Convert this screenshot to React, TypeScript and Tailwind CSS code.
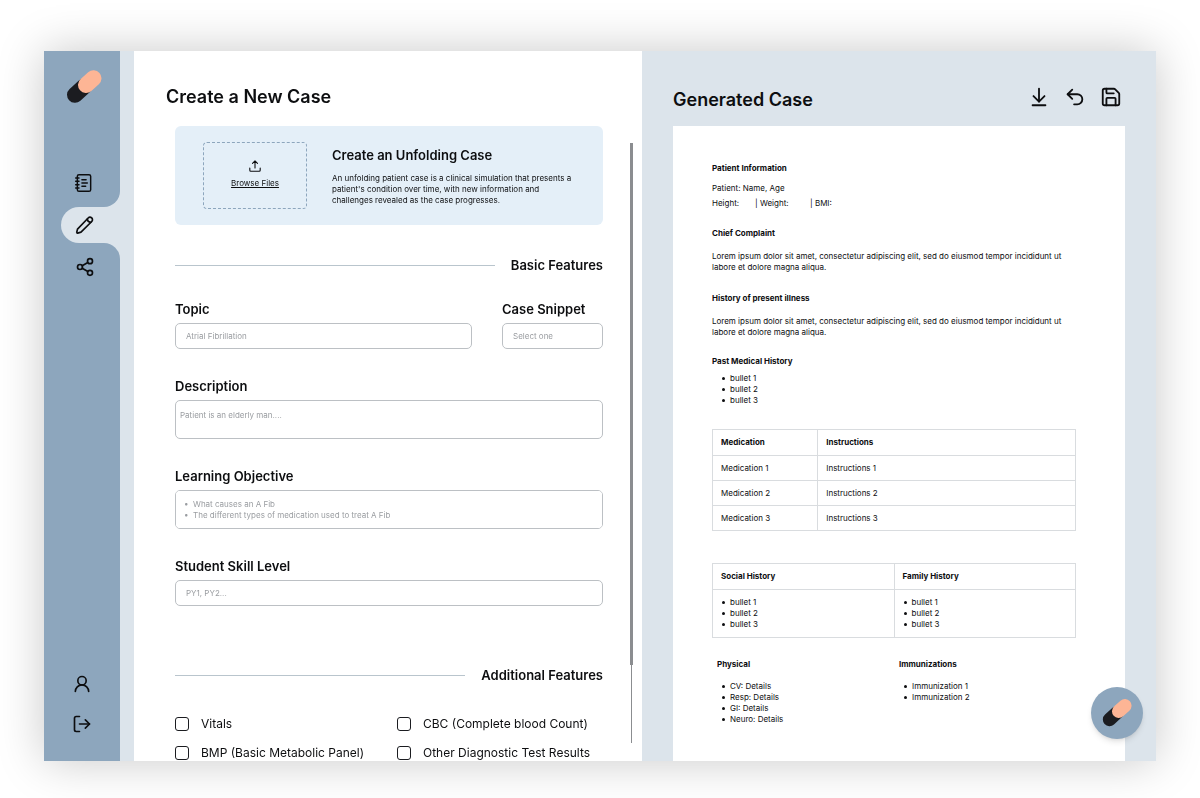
import React, { useState } from "react";
import {
	ArrowDownToLine,
	LogOut,
	NotebookText,
	Save,
	Share2,
	Undo2,
	UserRound,
} from "lucide-react";

const lorem =
	"Lorem ipsum dolor sit amet, consectetur adipiscing elit, sed do eiusmod tempor incididunt ut labore et dolore magna aliqua.";

const bullets = ["bullet 1", "bullet 2", "bullet 3"];

const labTests = [
	"Vitals",
	"CBC (Complete blood Count)",
	"BMP (Basic Metabolic Panel)",
	"Other Diagnostic Test Results",
];

const PillLogo: React.FC<{ className: string }> = ({ className }) => (
	<svg viewBox="0 0 36 36" className={className} aria-hidden="true">
		<path d="M9 25.800L18 17.600" stroke="#1b1c20" strokeWidth="16" strokeLinecap="round" />
		<path d="M20 16L27.500 9.300" stroke="#fdb595" strokeWidth="16" strokeLinecap="round" />
	</svg>
);

const PencilIcon: React.FC = () => (
	<svg
		viewBox="0 0 24 24"
		className="size-5"
		fill="none"
		stroke="currentColor"
		strokeWidth="2"
		strokeLinejoin="round"
		strokeLinecap="round"
		aria-hidden="true"
	>
		<path d="M3 17 15.800 3.600a2.900 2.900 0 0 1 4.300 4.200L7.200 20.600l-4 1.200c-.7.200-1.300-.4-1.100-1.100Z" />
		<path d="M14.800 4.800c.1 2.400 1.600 3.900 4.200 4" />
	</svg>
);

const UploadIcon: React.FC = () => (
	<svg
		viewBox="0 0 12 12"
		className="size-3"
		fill="none"
		stroke="currentColor"
		strokeWidth="1.1"
		strokeLinejoin="round"
		strokeLinecap="round"
		aria-hidden="true"
	>
		<path d="M6 8V1M3.500 3.300 6 .8l2.500 2.500M.8 8v2.200c0 .6.4 1 1 1h8.400c.6 0 1-.4 1-1V8" />
	</svg>
);

const Sidebar: React.FC = () => (
	<nav className="flex flex-col bg-[#dce4eb] pr-3.5">
		<div className="flex h-39 flex-col items-center justify-between rounded-br-2xl bg-[#8da6bd] pt-[18px] pb-3.5 pl-1">
			<PillLogo className="size-9" />
			<button aria-label="Cases">
				<NotebookText className="size-5" strokeWidth={1.75} />
			</button>
		</div>
		<div className="bg-[#8da6bd] pl-[17px]">
			<button
				aria-label="New case"
				className="flex h-9 w-full items-center rounded-l-full bg-[#dce4eb] pl-3.5"
			>
				<PencilIcon />
			</button>
		</div>
		<div className="flex flex-1 flex-col items-center justify-between rounded-tr-2xl bg-[#8da6bd] pt-3.5 pb-[27px]">
			<button aria-label="Share" className="pl-1.5">
				<Share2 className="size-5" />
			</button>
			<div className="flex flex-col gap-5">
				<button aria-label="Profile">
					<UserRound className="size-5" />
				</button>
				<button aria-label="Log out">
					<LogOut className="size-5" />
				</button>
			</div>
		</div>
	</nav>
);

const SectionTitle: React.FC<{ title: string }> = ({ title }) => (
	<div className="flex items-center gap-4">
		<hr className="flex-1 border-[#b9c5cd]" />
		<h3 className="text-[13px] leading-5 font-semibold">{title}</h3>
	</div>
);

const fieldClass =
	"block w-full rounded-[5px] border border-[#bcc0c4] bg-white text-[8px] leading-[11px] placeholder:text-[#9a9da1]";
const labelClass = "mb-1 block text-[13px] leading-5 font-semibold";

const CaseForm: React.FC = () => {
	const [checked, setChecked] = useState<string[]>([]);

	const toggle = (name: string) => {
		setChecked(
			checked.includes(name)
				? checked.filter((item) => item !== name)
				: [...checked, name]
		);
	};

	return (
		<main className="flex min-h-0 gap-[27px] overflow-hidden bg-white pr-[9px] pl-8">
			<div className="min-w-0 flex-1 pt-8">
				<h1 className="text-lg leading-7 font-semibold">Create a New Case</h1>
				<form className="mt-[15px] ml-[9px]">
					<div className="flex rounded-md bg-[#e4eff8] py-4 pr-6 pl-7">
						<button
							type="button"
							className="flex h-[67px] w-[104px] shrink-0 flex-col items-center justify-center gap-[5px] rounded border border-dashed border-[#8da6bd] pb-0.5 text-[8px] leading-3 underline"
						>
							<UploadIcon />
							Browse Files
						</button>
						<div className="ml-[25px] pt-[3px]">
							<h2 className="text-[13px] leading-5 font-semibold">
								Create an Unfolding Case
							</h2>
							<p className="mt-2 text-[8px] leading-[11px]">
								An unfolding patient case is a clinical simulation that presents a
								patient's condition over time, with new information and
								challenges revealed as the case progresses.
							</p>
						</div>
					</div>

					<div className="mt-[30px]">
						<SectionTitle title="Basic Features" />
					</div>

					<div className="mt-6 flex gap-[30px]">
						<div className="flex-1">
							<label htmlFor="topic" className={labelClass}>
								Topic
							</label>
							<input
								id="topic"
								placeholder="Atrial Fibrillation"
								className={`${fieldClass} h-[26px] px-2.5`}
							/>
						</div>
						<div className="w-[101px]">
							<label htmlFor="snippet" className={labelClass}>
								Case Snippet
							</label>
							<select
								id="snippet"
								className={`${fieldClass} h-[26px] appearance-none px-2.5 text-[#9a9da1]`}
							>
								<option>Select one</option>
							</select>
						</div>
					</div>

					<label htmlFor="description" className={`${labelClass} mt-[27px]`}>
						Description
					</label>
					<textarea
						id="description"
						placeholder="Patient is an elderly man...."
						className={`${fieldClass} h-[39px] resize-none px-1 py-[9px]`}
					/>

					<label htmlFor="objective" className={`${labelClass} mt-[27px]`}>
						Learning Objective
					</label>
					<textarea
						id="objective"
						placeholder={
							"•  What causes an A Fib\n•  The different types of medication used to treat A Fib"
						}
						className={`${fieldClass} h-[39px] resize-none px-2 py-2`}
					/>

					<label htmlFor="skill" className={`${labelClass} mt-[27px]`}>
						Student Skill Level
					</label>
					<input
						id="skill"
						placeholder="PY1, PY2..."
						className={`${fieldClass} h-[26px] px-2.5`}
					/>

					<div className="mt-[59px]">
						<SectionTitle title="Additional Features" />
					</div>

					<div className="mt-8 grid grid-cols-[222px_1fr] gap-y-[15px]">
						{labTests.map((name) => (
							<label
								key={name}
								className="flex items-center gap-3 text-xs leading-[14px] whitespace-nowrap"
							>
								<input
									type="checkbox"
									checked={checked.includes(name)}
									onChange={() => toggle(name)}
									className="size-3.5 appearance-none rounded-[3px] border border-[#1b1c20] bg-white checked:bg-[#8da6bd]"
								/>
								{name}
							</label>
						))}
					</div>
				</form>
			</div>
			{/* scroll track */}
			<div className="mt-[92px] mb-[18px] flex w-[3px] flex-col items-center bg-white">
				<div className="w-[3px] flex-[87] bg-[#8b8d90]" />
				<div className="w-px flex-[13] bg-[#8b8d90]" />
			</div>
		</main>
	);
};

const BulletList: React.FC<{ items: string[] }> = ({ items }) => (
	<ul className="pl-px">
		{items.map((item) => (
			<li
				key={item}
				className="flex items-center gap-[5px] before:size-[3px] before:rounded-full before:bg-current"
			>
				{item}
			</li>
		))}
	</ul>
);

const cellClass = "border border-[#d9dcdf] px-2 text-left";

const GeneratedCase: React.FC = () => (
	<section className="flex min-h-0 flex-col overflow-hidden bg-[#dce4eb] px-[31px]">
		<div className="flex items-center justify-between pt-8 pr-[3px]">
			<h2 className="text-lg leading-[34px] font-semibold">Generated Case</h2>
			<div className="flex gap-3.5 pb-1.5">
				<button aria-label="Download">
					<ArrowDownToLine className="size-[22px]" />
				</button>
				<button aria-label="Undo">
					<Undo2 className="size-[22px]" />
				</button>
				<button aria-label="Save">
					<Save className="size-[22px]" />
				</button>
			</div>
		</div>

		<article className="mt-[9px] flex-1 bg-white pt-[37px] pr-[49px] pl-[39px] text-[8px] leading-[11px]">
			<h3 className="font-bold">Patient Information</h3>
			<p className="mt-[9px]">Patient: Name, Age</p>
			<p className="mt-1 flex">
				<span className="w-[43px]">Height:</span>
				<span className="w-[55px]">| Weight:</span>
				<span>| BMI:</span>
			</p>

			<h3 className="mt-[19px] font-bold">Chief Complaint</h3>
			<p className="mt-3">{lorem}</p>

			<h3 className="mt-5 font-bold">History of present illness</h3>
			<p className="mt-3">{lorem}</p>

			<h3 className="mt-[18px] font-bold">Past Medical History</h3>
			<div className="mt-1.5 pl-[9px]">
				<BulletList items={bullets} />
			</div>

			<table className="mt-[23px] w-full table-fixed border-collapse">
				<thead>
					<tr className="h-[26px]">
						<th className={`${cellClass} w-[29%]`}>Medication</th>
						<th className={cellClass}>Instructions</th>
					</tr>
				</thead>
				<tbody>
					{[1, 2, 3].map((n) => (
						<tr key={n} className="h-[25px]">
							<td className={cellClass}>Medication {n}</td>
							<td className={cellClass}>Instructions {n}</td>
						</tr>
					))}
				</tbody>
			</table>

			<table className="mt-8 w-full table-fixed border-collapse">
				<thead>
					<tr className="h-[26px]">
						<th className={cellClass}>Social History</th>
						<th className={cellClass}>Family History</th>
					</tr>
				</thead>
				<tbody>
					<tr className="h-12">
						<td className={cellClass}>
							<BulletList items={bullets} />
						</td>
						<td className={cellClass}>
							<BulletList items={bullets} />
						</td>
					</tr>
				</tbody>
			</table>

			<div className="mt-[21px] grid grid-cols-2">
				<div className="pl-[5px]">
					<h3 className="mb-[11px] font-bold">Physical</h3>
					<div className="pl-1">
						<BulletList
							items={["CV: Details", "Resp: Details", "GI: Details", "Neuro: Details"]}
						/>
					</div>
				</div>
				<div className="pl-[5px]">
					<h3 className="mb-[11px] font-bold">Immunizations</h3>
					<div className="pl-1">
						<BulletList items={["Immunization 1", "Immunization 2"]} />
					</div>
				</div>
			</div>
		</article>
	</section>
);

const App: React.FC = () => (
	<div className="h-screen overflow-hidden bg-white px-11 pt-[51px] pb-[37px] font-['Inter',sans-serif] text-[#0d0e10]">
		<div className="relative grid h-full grid-cols-[90px_508fr_514fr] grid-rows-[minmax(0,1fr)] shadow-[0_0_44px_rgba(0,0,0,0.22)]">
			<Sidebar />
			<CaseForm />
			<GeneratedCase />
			<button
				aria-label="Open assistant"
				className="absolute right-[13px] bottom-[22px] flex size-[52px] items-center justify-center rounded-full bg-[#8da6bd] shadow-md"
			>
				<PillLogo className="size-[30px]" />
			</button>
		</div>
	</div>
);

export default App;
